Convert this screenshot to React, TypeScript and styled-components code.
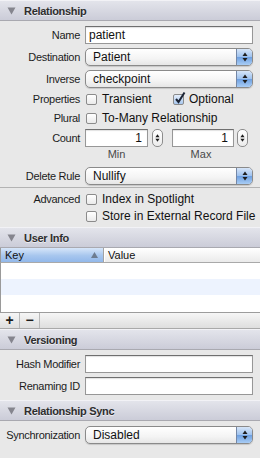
import styled, { createGlobalStyle } from "styled-components";

const Global = createGlobalStyle`
  body {
    margin: 0;
    background: #e8e8e8;
    font-family: "Liberation Sans", Arial, sans-serif;
    color: #111;
  }
`;

const Panel = styled.div`
  width: 260px;
  height: 458px;
  background: #e8e8e8;
  display: flex;
  flex-direction: column;
  overflow: hidden;
`;

const Header = styled.div`
  height: 19px;
  flex-shrink: 0;
  display: flex;
  align-items: center;
  padding-left: 7px;
  border-top: 1px solid #f2f2f6;
  border-bottom: 1px solid #a9a9b0;
  background: linear-gradient(#e3e4eb, #cbccd8);
`;

const HeaderTitle = styled.span`
  margin-left: 8px;
  font-size: 11px;
  font-weight: bold;
  letter-spacing: -0.3px;
  color: #2e2e2e;
  text-shadow: 0 1px 0 rgba(255, 255, 255, 0.6);
`;

const Section = styled.div<{ $pt?: number; $pb?: number; $line?: boolean }>`
  padding-top: ${(p) => p.$pt ?? 0}px;
  padding-bottom: ${(p) => p.$pb ?? 0}px;
  border-bottom: ${(p) => (p.$line ? "1px solid #b3b3b3" : "none")};
  display: flex;
  flex-direction: column;
`;

const Row = styled.div<{ $h: number; $mt?: number }>`
  height: ${(p) => p.$h}px;
  margin-top: ${(p) => p.$mt ?? 0}px;
  display: grid;
  grid-template-columns: 80px 1fr;
  column-gap: 5px;
  padding-right: 7px;
  align-items: center;
`;

const Label = styled.span`
  text-align: right;
  font-size: 11px;
  letter-spacing: -0.3px;
  color: #1c1c1c;
  white-space: nowrap;
`;

const TextField = styled.div<{ $right?: boolean }>`
  box-sizing: border-box;
  height: 18px;
  background: #fff;
  border: 1px solid #979797;
  border-top-color: #6f6f6f;
  box-shadow: inset 0 1px 1px rgba(0, 0, 0, 0.12);
  font-size: 12px;
  line-height: 16px;
  padding: 0 ${(p) => (p.$right ? 5 : 3)}px;
  text-align: ${(p) => (p.$right ? "right" : "left")};
`;

const Popup = styled.div`
  box-sizing: border-box;
  height: 18px;
  display: flex;
  border: 1px solid #8a8a8a;
  border-radius: 5px;
  overflow: hidden;
  background: linear-gradient(#ffffff, #f4f4f4 60%, #e6e6e6);
  box-shadow: 0 1px 1px rgba(0, 0, 0, 0.15);
`;

const PopupText = styled.span`
  flex: 1;
  padding-left: 7px;
  font-size: 12px;
  line-height: 16px;
`;

const PopupArrows = styled.span`
  width: 15px;
  border-left: 1px solid #7487a6;
  background: linear-gradient(#d6e5f8, #9dc1ee 50%, #6d9fe0 51%, #a9cdf5);
  display: flex;
  align-items: center;
  justify-content: center;
`;

const MiniStepper = styled.span`
  box-sizing: border-box;
  width: 11px;
  height: 18px;
  border: 1px solid #8d8d8d;
  border-radius: 5px;
  background: linear-gradient(#fff, #ececec);
  display: flex;
  align-items: center;
  justify-content: center;
`;

const Arrows = ({ w = 6 }: { w?: number }) => (
  <svg width={w} height="10" viewBox="0 0 6 10">
    <path d="M3 0.5 L5.5 4 L0.5 4 Z" fill="#1e1e1e" />
    <path d="M3 9.5 L5.5 6 L0.5 6 Z" fill="#1e1e1e" />
  </svg>
);

const Disclosure = () => (
  <svg width="9" height="8" viewBox="0 0 9 8">
    <path d="M0.5 0.5 L8.5 0.5 L4.5 7.5 Z" fill="#85858e" />
  </svg>
);

const CheckLine = styled.div`
  display: flex;
  align-items: center;
`;

const Check = styled.div<{ $w?: number }>`
  display: flex;
  align-items: center;
  width: ${(p) => (p.$w ? `${p.$w}px` : "auto")};
  font-size: 12px;
  white-space: nowrap;
`;

const Box = styled.span<{ $on?: boolean }>`
  position: relative;
  box-sizing: border-box;
  width: 11px;
  height: 11px;
  margin-left: 1px;
  margin-right: 5px;
  border: 1px solid #8b8b8b;
  border-radius: 2px;
  background: ${(p) =>
    p.$on ? "linear-gradient(#e4eefb, #a9c8ef)" : "linear-gradient(#fff, #eaeaea)"};
  flex-shrink: 0;
`;

const Tick = styled.svg`
  position: absolute;
  left: 0px;
  top: -4px;
`;

const CheckBox = ({ on, children, w }: { on?: boolean; children: string; w?: number }) => (
  <Check $w={w}>
    <Box $on={on}>
      {on && (
        <Tick width="12" height="13" viewBox="0 0 12 13">
          <path d="M2 8 L4.5 11 L10.5 1.5" fill="none" stroke="#1b2435" strokeWidth="2" />
        </Tick>
      )}
    </Box>
    {children}
  </Check>
);

const CountGrid = styled.div`
  display: grid;
  grid-template-columns: 63px 11px 66px 11px;
  column-gap: 4px;
  align-items: center;
  & > :nth-child(3) {
    margin-left: 5px;
    margin-right: -1px;
  }
`;

const Caption = styled.span<{ $w: number }>`
  width: ${(p) => p.$w}px;
  text-align: center;
  font-size: 11px;
  color: #4a4a4a;
`;

const CaptionRow = styled.div`
  display: flex;
  & > :first-child {
    margin-right: 20px;
  }
`;

const TableHead = styled.div`
  height: 14px;
  flex-shrink: 0;
  display: flex;
  font-size: 11px;
  border-bottom: 1px solid #a9a9a9;
  border-left: 1px solid #9a9a9a;
  background: linear-gradient(#ffffff, #eaeaea);
`;

const KeyCol = styled.div`
  width: 103px;
  display: flex;
  align-items: center;
  padding: 0 5px 0 4px;
  box-sizing: border-box;
  background: linear-gradient(#d7e6f9, #a7c6ee 55%, #92b8ea);
  border-right: 1px solid #a3a3a3;
  justify-content: space-between;
`;

const ValueCol = styled.div`
  flex: 1;
  display: flex;
  align-items: center;
  padding-left: 3px;
  border-left: 1px solid #fff;
`;

const TableRow = styled.div<{ $alt?: boolean; $h: number }>`
  height: ${(p) => p.$h}px;
  background: ${(p) => (p.$alt ? "#edf3fe" : "#ffffff")};
  border-left: 1px solid #9a9a9a;
`;

const ButtonBar = styled.div`
  height: 15px;
  flex-shrink: 0;
  display: flex;
  align-items: center;
  border-top: 1px solid #9c9c9c;
  border-bottom: 1px solid #a9a9a9;
  background: linear-gradient(#f6f6f6, #dedede);
`;

const BarButton = styled.span`
  width: 20px;
  height: 15px;
  display: flex;
  align-items: center;
  justify-content: center;
  font-size: 14px;
  font-weight: bold;
  color: #1c1c1c;
  border-right: 1px solid #b9b9b9;
  box-sizing: border-box;
  line-height: 15px;
`;

const Filler = styled.div`
  flex: 1;
`;

const App = () => {
  return (
    <Panel>
      <Global />
      <Header>
        <Disclosure />
        <HeaderTitle>Relationship</HeaderTitle>
      </Header>
      <Section $pt={3} $pb={2} $line>
        <Row $h={22}>
          <Label>Name</Label>
          <TextField>patient</TextField>
        </Row>
        <Row $h={22}>
          <Label>Destination</Label>
          <Popup>
            <PopupText>Patient</PopupText>
            <PopupArrows>
              <Arrows />
            </PopupArrows>
          </Popup>
        </Row>
        <Row $h={22}>
          <Label>Inverse</Label>
          <Popup>
            <PopupText>checkpoint</PopupText>
            <PopupArrows>
              <Arrows />
            </PopupArrows>
          </Popup>
        </Row>
        <Row $h={18}>
          <Label>Properties</Label>
          <CheckLine>
            <CheckBox w={87}>Transient</CheckBox>
            <CheckBox on>Optional</CheckBox>
          </CheckLine>
        </Row>
        <Row $h={20}>
          <Label>Plural</Label>
          <CheckBox>To-Many Relationship</CheckBox>
        </Row>
        <Row $h={20}>
          <Label>Count</Label>
          <CountGrid>
            <TextField $right>1</TextField>
            <MiniStepper>
              <Arrows w={5} />
            </MiniStepper>
            <TextField $right>1</TextField>
            <MiniStepper>
              <Arrows w={5} />
            </MiniStepper>
          </CountGrid>
        </Row>
        <Row $h={11}>
          <span />
          <CaptionRow>
            <Caption $w={63}>Min</Caption>
            <Caption $w={66}>Max</Caption>
          </CaptionRow>
        </Row>
        <Row $h={18} $mt={8}>
          <Label>Delete Rule</Label>
          <Popup>
            <PopupText>Nullify</PopupText>
            <PopupArrows>
              <Arrows />
            </PopupArrows>
          </Popup>
        </Row>
      </Section>
      <Section $pt={2} $pb={3}>
        <Row $h={18}>
          <Label>Advanced</Label>
          <CheckBox>Index in Spotlight</CheckBox>
        </Row>
        <Row $h={16}>
          <span />
          <CheckBox>Store in External Record File</CheckBox>
        </Row>
      </Section>
      <Header>
        <Disclosure />
        <HeaderTitle>User Info</HeaderTitle>
      </Header>
      <TableHead>
        <KeyCol>
          <span>Key</span>
          <svg width="7" height="6" viewBox="0 0 7 6">
            <path d="M3.5 0 L7 6 L0 6 Z" fill="#6d7c90" />
          </svg>
        </KeyCol>
        <ValueCol>Value</ValueCol>
      </TableHead>
      <TableRow $h={16} />
      <TableRow $h={16} $alt />
      <TableRow $h={17} />
      <ButtonBar>
        <BarButton>+</BarButton>
        <BarButton>−</BarButton>
      </ButtonBar>
      <Header>
        <Disclosure />
        <HeaderTitle>Versioning</HeaderTitle>
      </Header>
      <Section $pt={3} $pb={3}>
        <Row $h={22}>
          <Label>Hash Modifier</Label>
          <TextField />
        </Row>
        <Row $h={22}>
          <Label>Renaming ID</Label>
          <TextField />
        </Row>
      </Section>
      <Header>
        <Disclosure />
        <HeaderTitle>Relationship Sync</HeaderTitle>
      </Header>
      <Section $pt={2}>
        <Row $h={24}>
          <Label>Synchronization</Label>
          <Popup>
            <PopupText>Disabled</PopupText>
            <PopupArrows>
              <Arrows />
            </PopupArrows>
          </Popup>
        </Row>
      </Section>
      <Filler />
    </Panel>
  );
};

export default App;
